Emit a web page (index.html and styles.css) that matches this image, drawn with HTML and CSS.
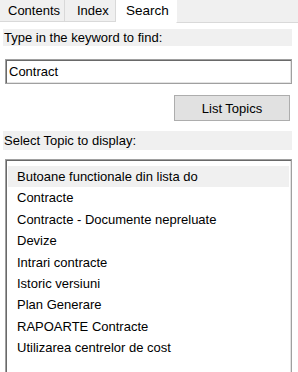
FILE: index.html
```html
<!DOCTYPE html>
<html>
<head>
<meta charset="utf-8">
<link rel="stylesheet" href="styles.css">
</head>
<body>
<div class="panel">
  <div class="tabs">
    <div class="tab">Contents</div>
    <div class="tab">Index</div>
    <div class="tab active">Search</div>
    <div class="tab-fill"></div>
  </div>
  <div class="content">
    <div class="label">Type in the keyword to find:</div>
    <div class="input"><span>Contract</span></div>
    <div class="btn-row"><div class="btn">List Topics</div></div>
    <div class="label label2">Select Topic to display:</div>
    <div class="list">
      <div class="item sel">Butoane functionale din lista do</div>
      <div class="item">Contracte</div>
      <div class="item">Contracte - Documente nepreluate</div>
      <div class="item">Devize</div>
      <div class="item">Intrari contracte</div>
      <div class="item">Istoric versiuni</div>
      <div class="item">Plan Generare</div>
      <div class="item">RAPOARTE Contracte</div>
      <div class="item">Utilizarea centrelor de cost</div>
    </div>
  </div>
</div>
</body>
</html>
```
FILE: styles.css
```css
html, body {
  margin: 0;
  padding: 0;
  background: #ffffff;
  width: 298px;
  height: 372px;
  overflow: hidden;
}
.panel {
  font-family: "Liberation Sans", Arial, sans-serif;
  font-size: 13px;
  color: #000;
  display: flex;
  flex-direction: column;
  height: 372px;
}
.tabs {
  display: flex;
  height: 22px;
  flex: none;
}
.tab {
  background: #f0f0f0;
  border-right: 1px solid #d9d9d9;
  border-bottom: 1px solid #d9d9d9;
  padding: 0 7px 0 7px;
  line-height: 21px;
  box-sizing: border-box;
  height: 22px;
}
.tab:first-child {
  padding-left: 8px;
  width: 65px;
}
.tab:nth-child(2) {
  width: 51px;
  padding-left: 12px;
}
.tab.active {
  background: #ffffff;
  border-bottom: 1px solid #ffffff;
  border-right: none;
  width: 60px;
  padding-left: 10px;
  font-size: 13.5px;
}
.tab-fill {
  flex: 1;
  background: #f0f0f0;
  border-left: 1px solid #ffffff;
  border-bottom: 1px solid #d9d9d9;
  box-sizing: border-box;
  height: 23px;
}
.content {
  flex: 1;
  min-height: 0;
  padding: 7px 6px 0 3px;
  display: flex;
  flex-direction: column;
}
.label {
  background: #f0f0f0;
  height: 17px;
  line-height: 17px;
  padding-left: 1px;
  flex: none;
}
.input {
  flex: none;
  margin: 13px 0 0 2px;
  height: 25px;
  box-sizing: border-box;
  border: 1px solid #a0a0a0;
  box-shadow: inset 1px 1px 0 #696969, inset -1px -1px 0 #e3e3e3;
  display: flex;
  align-items: center;
  padding-left: 3px;
}
.btn-row {
  flex: none;
  display: flex;
  justify-content: flex-end;
  margin-top: 11px;
  padding-right: 2px;
}
.btn {
  width: 116px;
  height: 26px;
  box-sizing: border-box;
  background: #e1e1e1;
  border: 1px solid #adadad;
  display: flex;
  align-items: center;
  justify-content: center;
}
.label2 {
  margin-top: 10px;
  height: 19px;
  line-height: 19px;
}
.list {
  flex: 1;
  min-height: 0;
  overflow: hidden;
  margin: 9px 0 0 2px;
  box-sizing: border-box;
  border: 1px solid #a0a0a0;
  border-bottom: none;
  box-shadow: inset 1px 1px 0 #696969, inset -1px 0 0 #e3e3e3;
  padding: 6px 2px 0 2px;
}
.item {
  height: 21.4px;
  line-height: 21px;
  padding-left: 9px;
  white-space: nowrap;
}
.item.sel {
  background: #f0f0f0;
}
```
